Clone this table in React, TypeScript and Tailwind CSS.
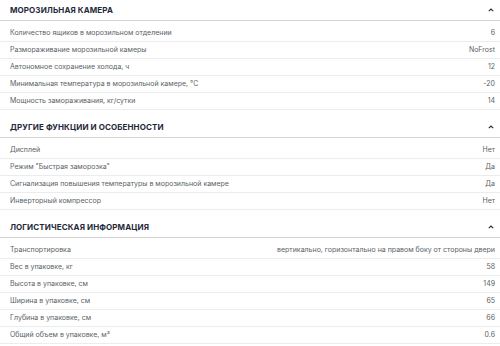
const sections: { title: string; rows: [string, string][] }[] = [
  {
    title: "МОРОЗИЛЬНАЯ КАМЕРА",
    rows: [
      ["Количество ящиков в морозильном отделении", "6"],
      ["Размораживание морозильной камеры", "NoFrost"],
      ["Автономное сохранение холода, ч", "12"],
      ["Минимальная температура в морозильной камере, °C", "-20"],
      ["Мощность замораживания, кг/сутки", "14"],
    ],
  },
  {
    title: "ДРУГИЕ ФУНКЦИИ И ОСОБЕННОСТИ",
    rows: [
      ["Дисплей", "Нет"],
      ["Режим \"Быстрая заморозка\"", "Да"],
      ["Сигнализация повышения температуры в морозильной камере", "Да"],
      ["Инверторный компрессор", "Нет"],
    ],
  },
  {
    title: "ЛОГИСТИЧЕСКАЯ ИНФОРМАЦИЯ",
    rows: [
      ["Транспортировка", "вертикально, горизонтально на правом боку от стороны двери"],
      ["Вес в упаковке, кг", "58"],
      ["Высота в упаковке, см", "149"],
      ["Ширина в упаковке, см", "65"],
      ["Глубина в упаковке, см", "66"],
      ["Общий объем в упаковке, м³", "0.6"],
    ],
  },
];

function Chevron() {
  return (
    <svg width="6" height="4" viewBox="0 0 6 4" fill="none" className="text-[#1f2a3a]">
      <path d="M0.8 3.2 L3 1 L5.2 3.2" stroke="currentColor" strokeWidth="1.1" />
    </svg>
  );
}

export default function App() {
  return (
    <div className="w-[500px] h-[346px] overflow-hidden bg-white font-['Inter',sans-serif]">
      {sections.map((s, i) => (
        <div key={s.title} className={i > 0 ? "mt-[7px]" : ""}>
          {/* Header */}
          <div className="h-[21px] flex items-center justify-between pl-[10px] pr-[6px] border-b border-[#d4d4d4]">
            <span className="text-[8px] font-bold text-[#1f2a3a] tracking-[0.1px]">{s.title}</span>
            <Chevron />
          </div>

          <div className="pt-1">
            {s.rows.map(([label, value]) => (
              <div
                key={label}
                className="h-[17px] flex items-center justify-between pl-[10px] pr-[5px] border-b border-[#ececec] text-[7px] text-[#5a5f66]"
              >
                <span>{label}</span>
                <span>{value}</span>
              </div>
            ))}
          </div>
        </div>
      ))}
    </div>
  );
}
